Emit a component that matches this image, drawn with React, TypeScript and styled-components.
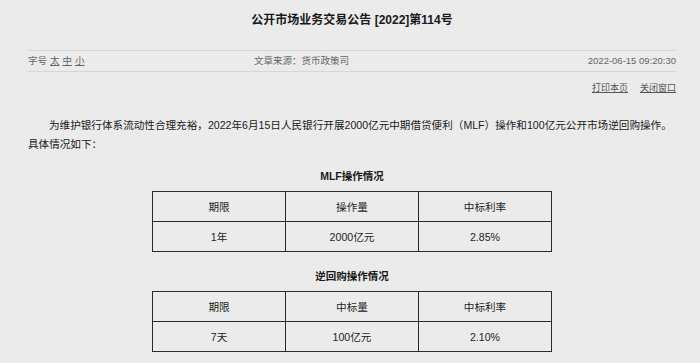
import React from "react";
import styled, { createGlobalStyle } from "styled-components";

const GlobalStyle = createGlobalStyle`
  html, body {
    margin: 0;
    padding: 0;
    background: #ebebeb;
  }
  body {
    font-family: "Liberation Sans", "Noto Sans CJK SC", sans-serif;
    color: #222;
  }
`;

const Page = styled.div`
  padding: 0 24px 0 28px;
  height: 363px;
  overflow: hidden;
`;

const Title = styled.h1`
  margin: 12px 0 22px;
  font-size: 12px;
  line-height: 16px;
  font-weight: bold;
  text-align: center;
  color: #1a1a1a;
`;

const InfoBar = styled.div`
  display: grid;
  grid-template-columns: 1fr 1fr 1fr;
  align-items: center;
  height: 20px;
  border-top: 1px solid #d6d6d6;
  border-bottom: 1px solid #d6d6d6;
  font-size: 9.5px;
  line-height: 20px;
  color: #666;
`;

const SizeLinks = styled.div`
  display: flex;
  gap: 3px;
  span {
    text-decoration: underline;
  }
`;

const Source = styled.div`
  padding-left: 10px;
`;

const Date = styled.div`
  text-align: right;
`;

const Actions = styled.div`
  display: flex;
  justify-content: flex-end;
  gap: 12px;
  margin-top: 9px;
  font-size: 9px;
  line-height: 14px;
  color: #555;
  a {
    color: inherit;
    text-decoration: underline;
  }
`;

const Paragraph = styled.p`
  margin: 21px 0 0;
  font-size: 10.6px;
  line-height: 19px;
  text-indent: 21px;
  color: #1a1a1a;
`;

const TableTitle = styled.div<{ $gap: number }>`
  margin-top: ${(p) => p.$gap}px;
  font-size: 10.5px;
  line-height: 16px;
  font-weight: bold;
  text-align: center;
  color: #1a1a1a;
`;

const Table = styled.table`
  width: 400px;
  margin: 7px auto 0;
  border-collapse: collapse;
  font-size: 10.6px;
  color: #1e1e1e;
  td {
    border: 1px solid #2a2a2a;
    height: 29px;
    padding: 0;
    text-align: center;
    width: 33.33%;
  }
`;

type Rows = string[][];

const DataTable = ({ rows }: { rows: Rows }) => (
  <Table>
    <tbody>
      {rows.map((r, i) => (
        <tr key={i}>
          {r.map((c, j) => (
            <td key={j}>{c}</td>
          ))}
        </tr>
      ))}
    </tbody>
  </Table>
);

export default function App() {
  return (
    <>
      <GlobalStyle />
      <Page>
        <Title>公开市场业务交易公告 [2022]第114号</Title>
        <InfoBar>
          <SizeLinks>
            字号 <span>太</span>
            <span>中</span>
            <span>小</span>
          </SizeLinks>
          <Source>文章来源：货币政策司</Source>
          <Date>2022-06-15 09:20:30</Date>
        </InfoBar>
        <Actions>
          <a>打印本页</a>
          <a>关闭窗口</a>
        </Actions>
        <Paragraph>
          为维护银行体系流动性合理充裕，2022年6月15日人民银行开展2000亿元中期借贷便利（MLF）操作和100亿元公开市场逆回购操作。具体情况如下：
        </Paragraph>
        <TableTitle $gap={14}>MLF操作情况</TableTitle>
        <DataTable
          rows={[
            ["期限", "操作量", "中标利率"],
            ["1年", "2000亿元", "2.85%"],
          ]}
        />
        <TableTitle $gap={16}>逆回购操作情况</TableTitle>
        <DataTable
          rows={[
            ["期限", "中标量", "中标利率"],
            ["7天", "100亿元", "2.10%"],
          ]}
        />
      </Page>
    </>
  );
}
